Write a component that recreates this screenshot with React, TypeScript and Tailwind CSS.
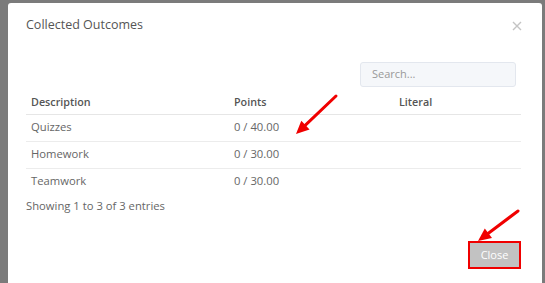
const rows = [
    { description: "Quizzes", points: "0 / 40.00", literal: "" },
    { description: "Homework", points: "0 / 30.00", literal: "" },
    { description: "Teamwork", points: "0 / 30.00", literal: "" },
]

const Arrow = ({ x1, y1, x2, y2 }: { x1: number, y1: number, x2: number, y2: number }) => {
    const a = Math.atan2(y2 - y1, x2 - x1)
    const len = 13
    const w = 6
    const bx = x2 - len * Math.cos(a)
    const by = y2 - len * Math.sin(a)
    const px = -Math.sin(a) * w
    const py = Math.cos(a) * w
    return (
        <g>
            <line x1={x1} y1={y1} x2={bx} y2={by} stroke="#f00000" strokeWidth={3} strokeLinecap="round" />
            <polygon points={`${x2},${y2} ${bx + px},${by + py} ${bx - px},${by - py}`} fill="#f00000" />
        </g>
    )
}

const App = () => {
    return (
        <div className="relative w-[545px] h-[283px] overflow-hidden bg-[#7b7b7b] pl-[8px] pr-[3px] pt-[3px] font-['Open_Sans',sans-serif]">

            {/* MODAL */}
            <div className="bg-white h-[300px] rounded-t-[3px]">

                {/* HEADER */}
                <div className="flex items-center justify-between pl-[18px] pr-[20px] pt-[12px] h-[32px]">
                    <h1 className="text-[12.5px] leading-[20px] text-[#555]">Collected Outcomes</h1>
                    <svg width="10" height="10" viewBox="0 0 10 10" className="mt-[1px]">
                        <path d="M1 1 L9 9 M9 1 L1 9" stroke="#c4c4c4" strokeWidth="1.4" />
                    </svg>
                </div>

                {/* BODY */}
                <div className="pl-[18px] pr-[21px] pt-[27px]">
                    <div className="flex justify-end pr-[5px]">
                        <div className="w-[156px] h-[25px] rounded-[3px] border border-[#e3e7ee] bg-[#f5f7fa] flex items-center pl-[11px] text-[11px] text-[#999]">
                            Search...
                        </div>
                    </div>

                    <table className="w-full mt-[3px] text-[11.25px] border-collapse">
                        <thead>
                            <tr className="h-[24px] border-b border-[#e6e6e6] text-left text-[#555] text-[10.75px]">
                                <th className="font-semibold pl-[5px] w-[208px]">Description</th>
                                <th className="font-semibold w-[165px]">Points</th>
                                <th className="font-semibold">Literal</th>
                            </tr>
                        </thead>
                        <tbody>
                            {rows.map((item, i) => (
                                <tr key={item.description} className={`h-[27px] text-[#666] ${i < rows.length - 1 ? "border-b border-[#ececec]" : ""}`}>
                                    <td className="pl-[5px]">{item.description}</td>
                                    <td>{item.points}</td>
                                    <td>{item.literal}</td>
                                </tr>
                            ))}
                        </tbody>
                    </table>

                    <div className="text-[11.25px] leading-[18px] text-[#666] mt-[2px]">Showing 1 to 3 of 3 entries</div>

                    {/* FOOTER */}
                    <div className="flex justify-end mt-[26px]">
                        <button className="w-[53px] h-[28px] border-[2px] border-[#f00000] bg-[#c2c2c2] text-white text-[11px]">
                            Close
                        </button>
                    </div>
                </div>
            </div>

            {/* ANNOTATIONS */}
            <svg className="absolute left-0 top-0 pointer-events-none" width="545" height="283">
                <Arrow x1={336} y1={96} x2={296} y2={134} />
                <Arrow x1={518} y1={211} x2={478} y2={241} />
            </svg>
        </div>
    )
}

export default App
